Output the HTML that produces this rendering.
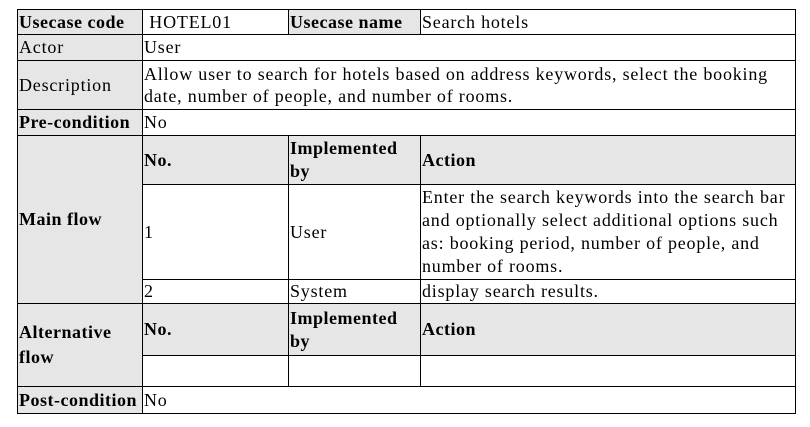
<!DOCTYPE html>
<html><head><style>
body{margin:0;background:#fff;width:810px;height:427px;overflow:hidden}
table{position:absolute;left:17px;top:9px;border-collapse:collapse;font-family:"Liberation Serif",serif;font-size:18px;letter-spacing:0.8px;line-height:23px;color:#000;table-layout:fixed}
td{border:1px solid #000;padding:0 1px;vertical-align:middle;overflow:hidden;white-space:nowrap}
.g{background:#e6e6e6;font-weight:bold;letter-spacing:0.5px}
.h{background:#e6e6e6}
</style></head><body>
<table>
<colgroup><col style="width:125px"><col style="width:146px"><col style="width:132px"><col style="width:375px"></colgroup>
<tr style="height:25px"><td class="g">Usecase code</td><td>&nbsp;HOTEL01</td><td class="g">Usecase name</td><td>Search hotels</td></tr>
<tr style="height:26px"><td class="h">Actor</td><td colspan="3">User</td></tr>
<tr style="height:49px"><td class="h">Description</td><td colspan="3" style="line-height:22px">Allow user to search for hotels based on address keywords, select the booking<br>date, number of people, and number of rooms.</td></tr>
<tr style="height:26px"><td class="g">Pre-condition</td><td colspan="3">No</td></tr>
<tr style="height:49px"><td class="g" rowspan="3">Main flow</td><td class="g">No.</td><td class="g">Implemented<br>by</td><td class="g">Action</td></tr>
<tr style="height:95px"><td>1</td><td>User</td><td>Enter the search keywords into the search bar<br>and optionally select additional options such<br>as: booking period, number of people, and<br>number of rooms.</td></tr>
<tr style="height:24px"><td>2</td><td>System</td><td>display search results.</td></tr>
<tr style="height:52px"><td class="g" rowspan="2" style="line-height:25px">Alternative<br>flow</td><td class="g">No.</td><td class="g">Implemented<br>by</td><td class="g">Action</td></tr>
<tr style="height:31px"><td></td><td></td><td></td></tr>
<tr style="height:27px"><td class="g">Post-condition</td><td colspan="3">No</td></tr>
</table>
</body></html>
